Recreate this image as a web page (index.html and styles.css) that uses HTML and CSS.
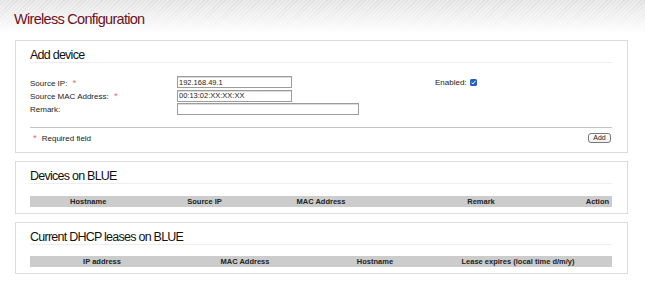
FILE: index.html
```html
<!DOCTYPE html>
<html lang="en">
<head>
    <meta charset="UTF-8">
    <meta name="viewport" content="width=device-width, initial-scale=1.0">
    <title>Wireless Configuration</title>
    <link rel="stylesheet" href="styles.css">
</head>
<body>
    <div class="header">
        <h1>Wireless Configuration</h1>
    </div>

    <div class="box add">
        <h2>Add device</h2>
        <div class="form">
            <label>Source IP: <span class="req">*</span></label>
            <input type="text" value="192.168.49.1">
            <div class="enabled">Enabled: <span class="check"><svg width="7" height="7" viewBox="0 0 7 7"><rect width="7" height="7" rx="1.5" fill="#2460c6"/><path d="M1.6 3.7 L2.9 5 L5.4 1.9" fill="none" stroke="#fff" stroke-width="1"/></svg></span></div>

            <label>Source MAC Address: <span class="req">*</span></label>
            <input type="text" value="00:13:02:XX:XX:XX">
            <div></div>

            <label>Remark:</label>
            <input type="text" class="wide" value="">
            <div></div>
        </div>
        <div class="footer">
            <span class="note"><span class="req">*</span>Required field</span>
            <button>Add</button>
        </div>
    </div>

    <div class="box">
        <h2>Devices on BLUE</h2>
        <table class="list">
            <tr>
                <th style="width:20%">Hostname</th>
                <th style="width:20%">Source IP</th>
                <th style="width:20%">MAC Address</th>
                <th style="width:35%">Remark</th>
                <th>Action</th>
            </tr>
        </table>
    </div>

    <div class="box">
        <h2>Current DHCP leases on BLUE</h2>
        <table class="list">
            <tr>
                <th style="width:144px">IP address</th>
                <th style="width:142px">MAC Address</th>
                <th style="width:118px">Hostname</th>
                <th class="last">Lease expires (local time d/m/y)</th>
            </tr>
        </table>
    </div>
</body>
</html>
```

FILE: styles.css
```css
*{box-sizing: border-box;}
body{margin: 0; font-family: "Liberation Sans", Arial, sans-serif; color: #222; background: #fff;}

.header{height: 40px; background: linear-gradient(to bottom, rgba(255,255,255,0) 0, rgba(255,255,255,0.55) 18px, #fff 34px), repeating-linear-gradient(135deg, #dedede 0 1px, #eaeaea 1px 3px);}
.header h1{margin: 0; padding: 11px 0 0 14px; font-size: 14.5px; line-height: 16px; font-weight: normal; letter-spacing: -0.7px; color: #6a1226;}

.box{margin: 0 17px 8px 15px; border: 1px solid #dcdcdc; padding: 7px 15px 6px 14px;}
.box.add{padding-bottom: 9px;}
.box h2{margin: 0; font-size: 12.5px; line-height: 14px; font-weight: normal; letter-spacing: -0.75px; color: #111; border-bottom: 1px solid #eeeeee;}

.form{display: grid; grid-template-columns: 147px 258px auto; grid-auto-rows: 12px; row-gap: 1.5px; margin-top: 13px; padding-bottom: 12px; border-bottom: 1px solid #c4c4c4; font-size: 8px; align-items: center;}
.form input{width: 115px; height: 12px; border: 1px solid #9c9c9c; box-shadow: inset 0 1px 0 #dcdcdc; padding: 0 1px; font-family: inherit; font-size: 7.5px; color: #222; outline: none;}
.form input.wide{width: 182px;}
.req{color: #e0707c; font-size: 9.5px; margin-left: 3px;}
.enabled{display: flex; align-items: center; gap: 3px;}
.check svg{display: block;}

.footer{display: flex; justify-content: space-between; align-items: center; padding: 4px 1px 0 3px; font-size: 8px;}
.footer .req{margin: 0 5px 0 0;}
.footer button{height: 10px; width: 23px; padding: 0; border: 1px solid #7a7a7a; border-radius: 3px; background: linear-gradient(#fff, #eeeeee); font-family: inherit; font-size: 7px; line-height: 8px; color: #222;}

.list{width: 100%; border-collapse: collapse; margin-top: 11.5px;}
.list th{background: #cccccc; height: 11px; padding: 0; font-size: 7.5px; line-height: 11px; font-weight: bold; color: #222; text-align: center;}
.list th.last{padding-right: 10px;}
```
